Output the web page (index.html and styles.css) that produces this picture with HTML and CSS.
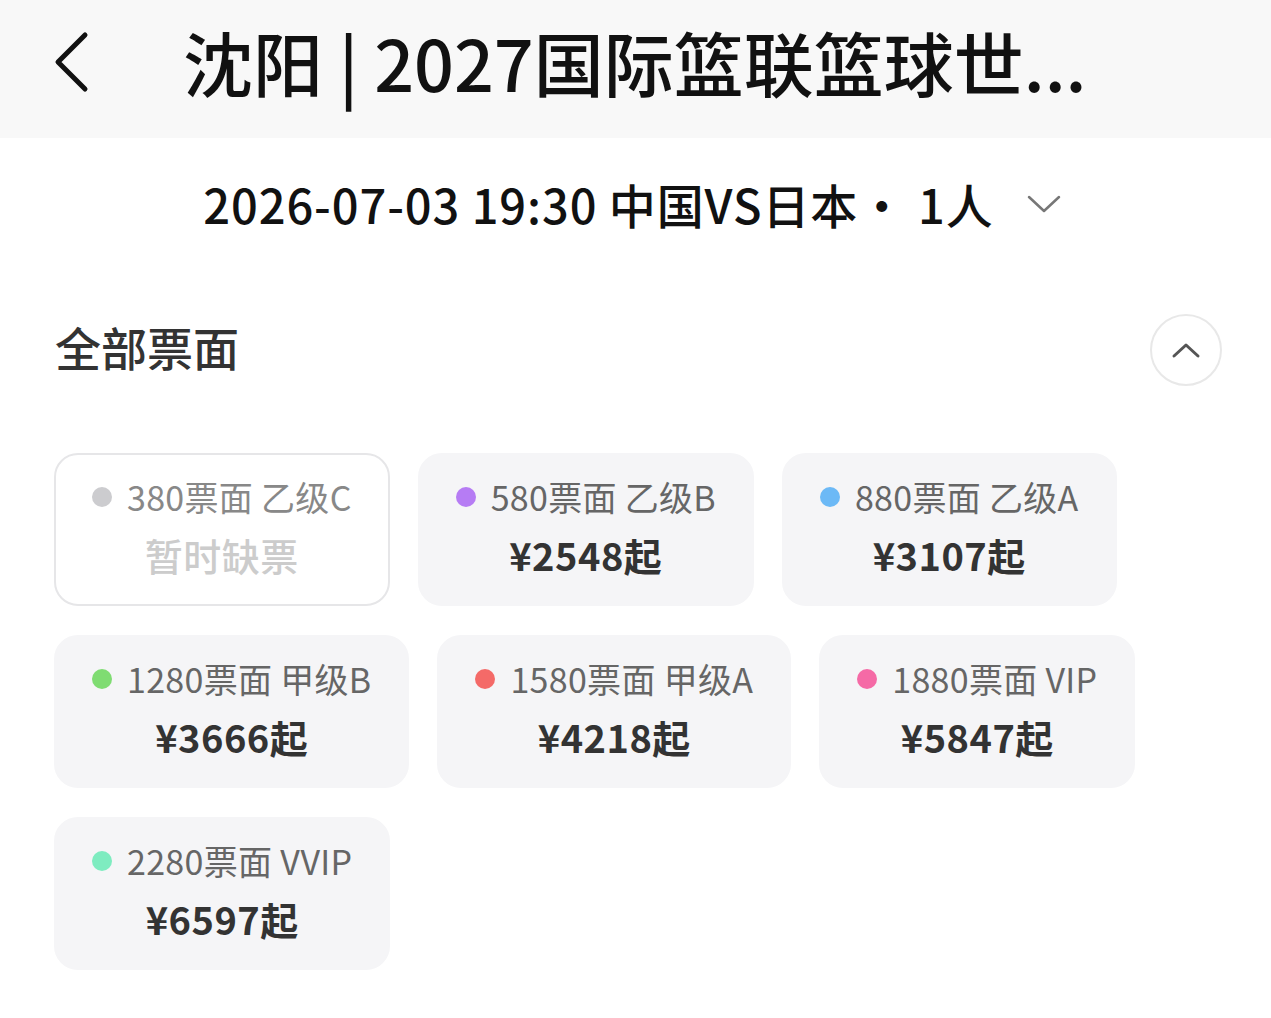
FILE: index.html
```html
<!DOCTYPE html>
<html lang="zh-CN">
<head>
    <meta charset="UTF-8">
    <title>选择票档</title>
    <link rel="stylesheet" href="styles.css">
</head>
<body>

<div class="topbar">
    <svg class="back" width="40" height="62" viewBox="0 0 40 62">
        <path d="M33 4 L6 31 L33 58" fill="none" stroke="#111" stroke-width="5" stroke-linecap="round" stroke-linejoin="round"/>
    </svg>
    <h1 class="title">沈阳 | 2027国际篮联篮球世...</h1>
</div>

<div class="session">
    <span>2026-07-03 19:30 中国VS日本<span class="sep">·</span>1人</span>
    <svg class="arrow-down" width="36" height="22" viewBox="0 0 36 22">
        <path d="M3 4 L18 18 L33 4" fill="none" stroke="#777" stroke-width="2.5" stroke-linecap="round" stroke-linejoin="round"/>
    </svg>
</div>

<div class="section-head">
    <h2>全部票面</h2>
    <div class="fold">
        <svg width="30" height="18" viewBox="0 0 30 18">
            <path d="M3 15 L15 4 L27 15" fill="none" stroke="#555" stroke-width="3" stroke-linecap="round" stroke-linejoin="round"/>
        </svg>
    </div>
</div>

<div class="tickets">
    <div class="ticket soldout">
        <div class="label"><i class="dot" style="background:#cccccf"></i>380票面 乙级C</div>
        <div class="price">暂时缺票</div>
    </div>
    <div class="ticket">
        <div class="label"><i class="dot" style="background:#b67cf4"></i>580票面 乙级B</div>
        <div class="price">¥2548起</div>
    </div>
    <div class="ticket">
        <div class="label"><i class="dot" style="background:#6cb9f6"></i>880票面 乙级A</div>
        <div class="price">¥3107起</div>
    </div>
    <div class="ticket">
        <div class="label"><i class="dot" style="background:#7fdc72"></i>1280票面 甲级B</div>
        <div class="price">¥3666起</div>
    </div>
    <div class="ticket">
        <div class="label"><i class="dot" style="background:#f46a68"></i>1580票面 甲级A</div>
        <div class="price">¥4218起</div>
    </div>
    <div class="ticket">
        <div class="label"><i class="dot" style="background:#f56aa6"></i>1880票面 VIP</div>
        <div class="price">¥5847起</div>
    </div>
    <div class="ticket">
        <div class="label"><i class="dot" style="background:#7eecc0"></i>2280票面 VVIP</div>
        <div class="price">¥6597起</div>
    </div>
</div>

</body>
</html>
```

FILE: styles.css
```css
body {
    margin: 0;
    background: #fff;
    font-family: "Noto Sans CJK SC", "Noto Sans", sans-serif;
    color: #222;
}

.topbar {
    height: 124px;
    background: #f8f8f8;
    display: flex;
    align-items: center;
    padding: 0 0 14px 52px;
}

.back {
    flex-shrink: 0;
}

.title {
    margin: 0 0 0 91px;
    font-size: 70px;
    font-weight: 500;
    color: #111;
    white-space: nowrap;
    line-height: 1;
}

.session {
    height: 130px;
    display: flex;
    align-items: center;
    justify-content: center;
    font-size: 47px;
    font-weight: 500;
    letter-spacing: 0.9px;
    color: #111;
    padding-right: 6px;
}

.sep {
    margin: 0 12px 0 0;
}

.arrow-down {
    margin-left: 32px;
    margin-top: 2px;
}

.section-head {
    display: flex;
    align-items: center;
    justify-content: space-between;
    padding: 46px 49px 0 55px;
}

.section-head h2 {
    margin: -8px 0 0;
    font-size: 46px;
    font-weight: 500;
    color: #333;
}

.fold {
    width: 68px;
    height: 68px;
    border: 2px solid #e8e8e8;
    border-radius: 50%;
    display: flex;
    align-items: center;
    justify-content: center;
}

.tickets {
    display: flex;
    flex-wrap: wrap;
    align-items: flex-start;
    gap: 29px 28px;
    padding: 67px 55px 0 54px;
    max-width: 1100px;
}

.ticket {
    background: #f5f5f7;
    border: 2px solid #f5f5f7;
    border-radius: 24px;
    padding: 22px 36px 25px;
    text-align: center;
}

.ticket.soldout {
    background: #fff;
    border-color: #e6e6e8;
}

.label {
    display: flex;
    align-items: center;
    justify-content: center;
    font-size: 34px;
    line-height: 40px;
    letter-spacing: 0.3px;
    color: #666;
    white-space: nowrap;
}

.dot {
    width: 20px;
    height: 20px;
    border-radius: 50%;
    margin-right: 15px;
    flex-shrink: 0;
}

.price {
    margin-top: 14px;
    font-size: 38px;
    line-height: 48px;
    font-weight: 700;
    letter-spacing: 0.5px;
    color: #333;
}

.soldout .label {
    color: #888;
}

.soldout .price {
    font-weight: 500;
    color: #ccc;
}
```
